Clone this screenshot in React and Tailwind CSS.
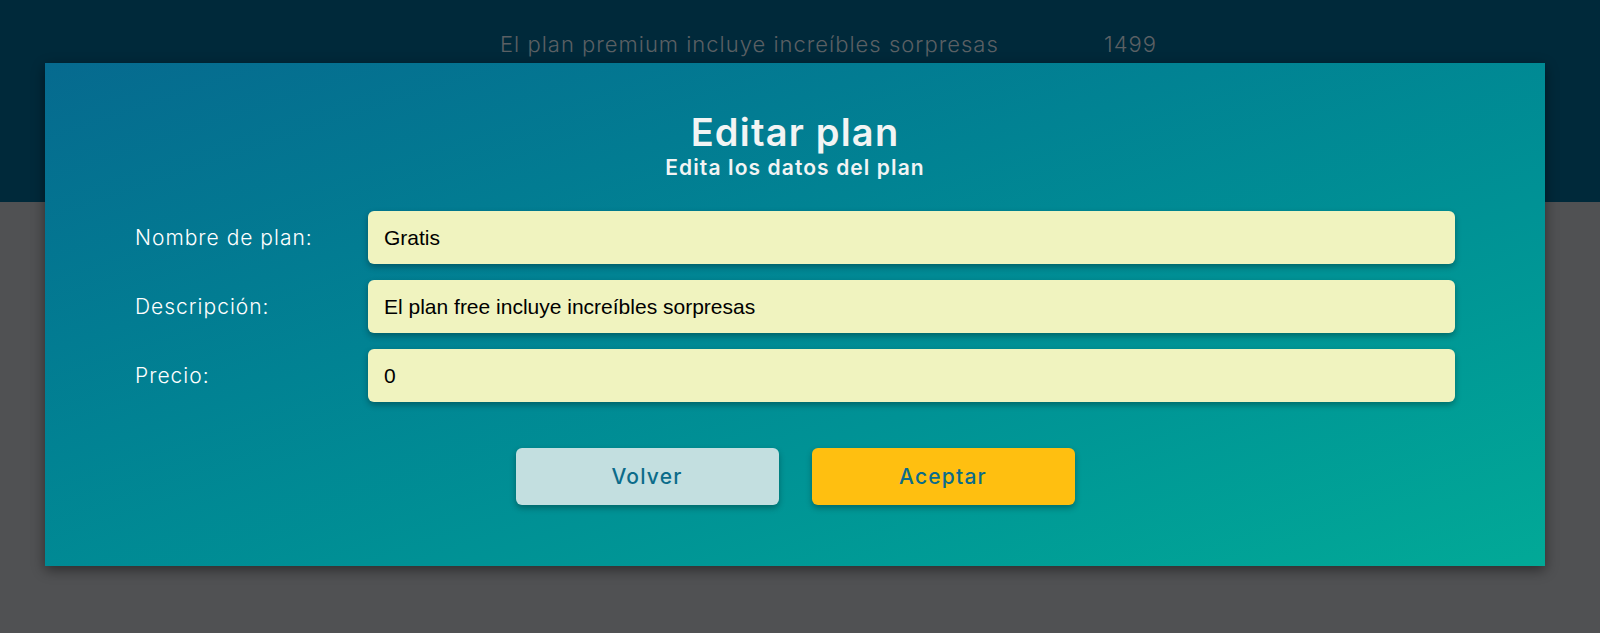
import React from 'react';

const fields = [
  { label: 'Nombre de plan:', value: 'Gratis' },
  { label: 'Descripción:', value: 'El plan free incluye increíbles sorpresas' },
  { label: 'Precio:', value: '0' },
];

const App = () => {
  return (
    <div className="relative h-[633px] w-[1600px] overflow-hidden bg-[#505153] font-['Inter',sans-serif]">
      {/* background page (dimmed) */}
      <div className="h-[202px] bg-[#00293a]">
        <div className="flex items-center pt-[28px] text-[22px] font-light tracking-[1px] text-[#5b6064]">
          <span className="ml-[500px] w-[604px]">El plan premium incluye increíbles sorpresas</span>
          <span>1499</span>
        </div>
      </div>

      {/* modal */}
      <div className="absolute left-[45px] top-[63px] h-[503px] w-[1500px] bg-gradient-to-br from-[#066a8f] to-[#02a997] px-[90px] pt-[46px] shadow-[0_4px_12px_rgba(0,0,0,0.45)]">
        <div className="text-center text-[#f2f4f4]">
          <h1 className="text-[38px] font-semibold leading-[46px] tracking-[1.2px]">Editar plan</h1>
          <p className="text-[21px] font-semibold leading-[25px] tracking-[1.1px]">Edita los datos del plan</p>
        </div>

        <div className="mt-[31px] flex flex-col gap-[16px]">
          {fields.map((f) => (
            <div key={f.label} className="flex items-center">
              <label className="w-[233px] text-[21px] font-light tracking-[1px] text-white">{f.label}</label>
              <input
                readOnly
                value={f.value}
                className="h-[53px] flex-1 rounded-[6px] bg-[#f0f3bf] px-[16px] font-['Liberation_Sans',sans-serif] text-[21px] text-black shadow-[0_3px_6px_rgba(0,0,0,0.3)] outline-none"
              />
            </div>
          ))}
        </div>

        <div className="mt-[46px] flex justify-center gap-[33px]">
          <button className="h-[57px] w-[263px] rounded-[6px] bg-[#c3dfe0] text-[21px] font-medium tracking-[1.2px] text-[#0b6c8a] shadow-[0_3px_6px_rgba(0,0,0,0.3)]">
            Volver
          </button>
          <button className="h-[57px] w-[263px] rounded-[6px] bg-[#ffbf10] text-[21px] font-medium tracking-[1.2px] text-[#0b6c8a] shadow-[0_3px_6px_rgba(0,0,0,0.3)]">
            Aceptar
          </button>
        </div>
      </div>
    </div>
  );
};

export default App;
